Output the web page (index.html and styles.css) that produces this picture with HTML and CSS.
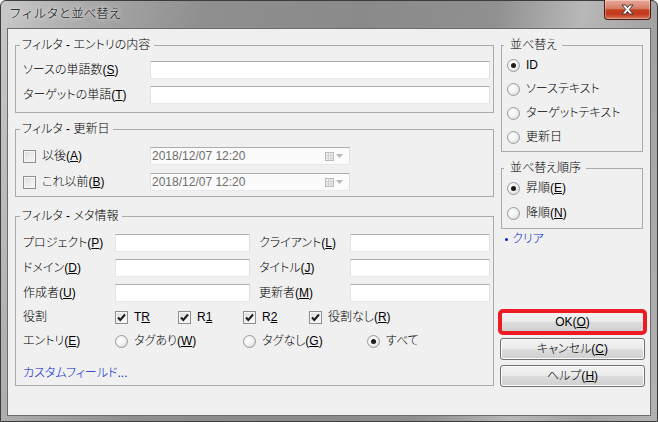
FILE: index.html
```html
<!DOCTYPE html>
<html lang="ja">
<head>
  <meta charset="UTF-8">
  <meta name="viewport" content="width=device-width, initial-scale=1.0">
  <title>フィルタと並べ替え</title>
  <link rel="stylesheet" href="styles.css">
</head>
<body>
  <div class="window">
    <div class="titlebar">
      <span class="titlebar__text">フィルタと並べ替え</span>
      <button class="titlebar__close" aria-label="閉じる">
        <svg width="13" height="11" viewBox="0 0 13 11"><path d="M1 1H4.5L6.5 3.6L8.5 1H12L8.3 5.5L12 10H8.5L6.5 7.4L4.5 10H1L4.7 5.5Z" fill="#fff" stroke="#3a3a3a" stroke-width="1" stroke-linejoin="round"/></svg>
      </button>
    </div>

    <div class="client">
      <div class="filters">
        <fieldset class="group group--entry">
          <legend class="group__title">フィルタ - エントリの内容</legend>
          <div class="row">
            <span class="row__label">ソースの単語数(<u>S</u>)</span>
            <span class="textbox textbox--wide"></span>
          </div>
          <div class="row">
            <span class="row__label">ターゲットの単語(<u>T</u>)</span>
            <span class="textbox textbox--wide"></span>
          </div>
        </fieldset>

        <fieldset class="group group--date">
          <legend class="group__title">フィルタ - 更新日</legend>
          <div class="row">
            <span class="row__label"><span class="check"></span><span class="choice__text">以後(<u>A</u>)</span></span>
            <span class="datebox">
              <span>2018/12/07 12:20</span>
              <span class="datebox__icons">
                <svg width="9" height="9" viewBox="0 0 9 9"><rect x="0.5" y="0.5" width="8" height="8" fill="#f2f2f2" stroke="#b8b8b8"/><path d="M0.5 3.5H8.5M0.5 6H8.5M3.5 0.5V8.5M6 0.5V8.5" stroke="#d0d0d0"/></svg>
                <svg width="7" height="4" viewBox="0 0 7 4"><path d="M0 0H7L3.5 4Z" fill="#b8b8b8"/></svg>
              </span>
            </span>
          </div>
          <div class="row">
            <span class="row__label"><span class="check"></span><span class="choice__text">これ以前(<u>B</u>)</span></span>
            <span class="datebox">
              <span>2018/12/07 12:20</span>
              <span class="datebox__icons">
                <svg width="9" height="9" viewBox="0 0 9 9"><rect x="0.5" y="0.5" width="8" height="8" fill="#f2f2f2" stroke="#b8b8b8"/><path d="M0.5 3.5H8.5M0.5 6H8.5M3.5 0.5V8.5M6 0.5V8.5" stroke="#d0d0d0"/></svg>
                <svg width="7" height="4" viewBox="0 0 7 4"><path d="M0 0H7L3.5 4Z" fill="#b8b8b8"/></svg>
              </span>
            </span>
          </div>
        </fieldset>

        <fieldset class="group group--meta">
          <legend class="group__title">フィルタ - メタ情報</legend>
          <div class="row">
            <span class="row__label row__label--meta">プロジェクト(<u>P</u>)</span>
            <span class="textbox textbox--short"></span>
            <span class="row__label row__label--second">クライアント(<u>L</u>)</span>
            <span class="textbox textbox--mid"></span>
          </div>
          <div class="row">
            <span class="row__label row__label--meta">ドメイン(<u>D</u>)</span>
            <span class="textbox textbox--short"></span>
            <span class="row__label row__label--second">タイトル(<u>J</u>)</span>
            <span class="textbox textbox--mid"></span>
          </div>
          <div class="row">
            <span class="row__label row__label--meta">作成者(<u>U</u>)</span>
            <span class="textbox textbox--short"></span>
            <span class="row__label row__label--second">更新者(<u>M</u>)</span>
            <span class="textbox textbox--mid"></span>
          </div>
          <div class="row row--roles">
            <span class="row__label row__label--meta">役割</span>
            <span class="choice choice--tr"><span class="check is-checked"><svg width="11" height="11" viewBox="0 0 11 11"><path d="M2 5.5L4.3 8L9 2.5" fill="none" stroke="#1c1c1c" stroke-width="2"/></svg></span><span class="choice__text">T<u>R</u></span></span>
            <span class="choice choice--r1"><span class="check is-checked"><svg width="11" height="11" viewBox="0 0 11 11"><path d="M2 5.5L4.3 8L9 2.5" fill="none" stroke="#1c1c1c" stroke-width="2"/></svg></span><span class="choice__text">R<u>1</u></span></span>
            <span class="choice choice--r2"><span class="check is-checked"><svg width="11" height="11" viewBox="0 0 11 11"><path d="M2 5.5L4.3 8L9 2.5" fill="none" stroke="#1c1c1c" stroke-width="2"/></svg></span><span class="choice__text">R<u>2</u></span></span>
            <span class="choice"><span class="check is-checked"><svg width="11" height="11" viewBox="0 0 11 11"><path d="M2 5.5L4.3 8L9 2.5" fill="none" stroke="#1c1c1c" stroke-width="2"/></svg></span><span class="choice__text">役割なし(<u>R</u>)</span></span>
          </div>
          <div class="row row--entry">
            <span class="row__label row__label--meta">エントリ(<u>E</u>)</span>
            <span class="choice choice--tagged"><span class="radio"></span><span class="choice__text">タグあり(<u>W</u>)</span></span>
            <span class="choice choice--untagged"><span class="radio"></span><span class="choice__text">タグなし(<u>G</u>)</span></span>
            <span class="choice"><span class="radio is-checked"></span><span class="choice__text">すべて</span></span>
          </div>
          <div class="row row--link">
            <span class="link">カスタムフィールド...</span>
          </div>
        </fieldset>
      </div>

      <div class="side">
        <fieldset class="group group--side group--sort">
          <legend class="group__title group__title--side">並べ替え</legend>
          <div class="row"><span class="choice"><span class="radio is-checked"></span><span class="choice__text">ID</span></span></div>
          <div class="row"><span class="choice"><span class="radio"></span><span class="choice__text">ソーステキスト</span></span></div>
          <div class="row"><span class="choice"><span class="radio"></span><span class="choice__text">ターゲットテキスト</span></span></div>
          <div class="row"><span class="choice"><span class="radio"></span><span class="choice__text">更新日</span></span></div>
        </fieldset>

        <fieldset class="group group--side group--order">
          <legend class="group__title group__title--side">並べ替え順序</legend>
          <div class="row"><span class="choice"><span class="radio is-checked"></span><span class="choice__text">昇順(<u>E</u>)</span></span></div>
          <div class="row"><span class="choice"><span class="radio"></span><span class="choice__text">降順(<u>N</u>)</span></span></div>
        </fieldset>

        <div class="clear"><span class="clear__dot"></span><span class="link">クリア</span></div>

        <div class="actions">
          <button class="button button--default">OK(<u>O</u>)</button>
          <button class="button">キャンセル(<u>C</u>)</button>
          <button class="button">ヘルプ(<u>H</u>)</button>
        </div>
      </div>
    </div>
  </div>
</body>
</html>
```

FILE: styles.css
```css
* {
  box-sizing: border-box;
}

html,
body {
  margin: 0;
  height: 100%;
  overflow: hidden;
}

body {
  font-family: "Liberation Sans", "Noto Sans CJK JP", sans-serif;
  font-size: 12px;
  font-weight: 300;
  line-height: 14px;
  color: #000;
  font-feature-settings: "palt";
  background: #fff;
}

u {
  text-underline-offset: 1px;
}

.window {
  display: flex;
  flex-direction: column;
  width: 658px;
  height: 422px;
  padding: 0 6px 5px;
  border: 1px solid #3c3c3c;
  border-radius: 6px 6px 0 0;
  background: linear-gradient(100deg, #c9c9c9 0%, #a9a9a9 12%, #8f8f8f 28%, #8a8a8a 50%, #909090 68%, #b8b8b8 80%, #a2a2a2 90%, #b3b3b3 100%);
}

.titlebar {
  display: flex;
  justify-content: space-between;
  align-items: flex-start;
  height: 27px;
}

.titlebar__text {
  padding: 6px 0 0 2px;
  font-size: 12.5px;
  font-feature-settings: normal;
  text-shadow: 0 0 6px rgba(255, 255, 255, .9), 0 0 2px rgba(255, 255, 255, .8);
}

.titlebar__close {
  display: flex;
  align-items: center;
  justify-content: center;
  width: 47px;
  height: 20px;
  margin-top: -1px;
  padding: 0;
  border: 1px solid #4a1a12;
  border-top: none;
  border-radius: 0 0 4px 4px;
  background: linear-gradient(#e8a999 0%, #d67c64 45%, #c2401f 52%, #c43a20 75%, #d7765b 100%);
  box-shadow: inset 0 0 0 1px rgba(255, 255, 255, .35);
}

.client {
  flex: 1;
  display: flex;
  gap: 7px;
  padding: 9px 7px 28px;
  border: 1px solid #6b6b6b;
  background: #f0f0f0;
}

.filters {
  width: 479px;
  flex: none;
}

.side {
  display: flex;
  flex-direction: column;
  width: 142px;
  flex: none;
}

.group {
  margin: 0;
  border: 1px solid #a9a9a9;
  min-inline-size: 0;
}

.group__title {
  margin-left: -3px;
  padding: 0 4px 0 2px;
  line-height: 14px;
}

.group__title--side {
  margin-left: -3px;
  padding: 0 5px 0 6px;
}

.group--entry {
  padding: 9px 3px 8px 7px;
}

.group--date {
  margin-top: 9px;
  padding: 11px 3px 5px 7px;
}

.group--meta {
  margin-top: 12px;
  padding: 11px 3px 5px 7px;
}

.row {
  display: flex;
  align-items: center;
  height: 18px;
}

.row + .row {
  margin-top: 7px;
}

.group--date .row + .row {
  margin-top: 8px;
}

.group--meta .row--roles,
.group--meta .row--entry {
  margin-top: 6px;
}

.group--meta .row--link {
  height: 14px;
  margin-top: 16px;
}

.row__label {
  display: flex;
  align-items: center;
  width: 127px;
  flex: none;
}

.row__label--meta {
  width: 92px;
}

.row__label--second {
  width: 91px;
  margin-left: 9px;
}

.textbox {
  display: block;
  height: 18px;
  background: #fff;
  border: 1px solid;
  border-color: #abadb3 #dbdfe6 #e3e9ef #e2e3ea;
}

.textbox--wide {
  width: 340px;
}

.textbox--short {
  width: 135px;
}

.textbox--mid {
  width: 140px;
}

.datebox {
  display: flex;
  align-items: center;
  justify-content: space-between;
  width: 200px;
  height: 18px;
  padding: 0 6px 0 1px;
  font-family: "Liberation Sans", sans-serif;
  font-weight: 400;
  color: #6d6d6d;
  background: #fbfbfb;
  border: 1px solid;
  border-color: #abadb3 #dbdfe6 #e3e9ef #e2e3ea;
}

.datebox__icons {
  display: flex;
  align-items: center;
  gap: 2px;
}

.choice {
  display: flex;
  align-items: center;
}

.choice--tr {
  width: 63px;
}

.choice--r1 {
  width: 65px;
}

.choice--r2 {
  width: 66px;
}

.choice--tagged {
  width: 128px;
}

.choice--untagged {
  width: 124px;
}

.choice__text {
  margin-left: 6px;
}

.check {
  display: block;
  flex: none;
  width: 13px;
  height: 13px;
  border: 1px solid #8e8f8f;
  background: linear-gradient(135deg, #dcdcdc, #fbfbfb);
  box-shadow: inset 0 0 0 1px #f6f6f6;
}

.check svg {
  display: block;
}

.radio {
  display: block;
  flex: none;
  width: 13px;
  height: 13px;
  padding: 3px;
  border: 1px solid #9a9a9a;
  border-radius: 50%;
  background: radial-gradient(circle at 40% 40%, #fff 0, #f2f2f2 45%, #cdcdcd 100%);
}

.radio.is-checked::after {
  content: "";
  display: block;
  width: 5px;
  height: 5px;
  border-radius: 50%;
  background: #1b1b1b;
}

.link {
  color: #0026cc;
}

.group--side {
  padding: 4px 3px 5px 5px;
}

.group--side .row + .row {
  margin-top: 6px;
}

.group--order {
  margin-top: 9px;
  padding-bottom: 6px;
}

.group--order .row + .row {
  margin-top: 7px;
}

.clear {
  display: flex;
  align-items: center;
  margin-top: 3px;
  padding-left: 4px;
}

.clear__dot {
  width: 3px;
  height: 3px;
  margin-right: 4px;
  border-radius: 50%;
  background: #0026cc;
}

.actions {
  display: flex;
  flex-direction: column;
  gap: 5px;
  margin: auto -2px 0 -1px;
}

.button {
  height: 22px;
  padding: 0;
  font: inherit;
  color: #000;
  border: 1px solid #707070;
  border-radius: 3px;
  background: linear-gradient(#f2f2f2 0%, #ebebeb 50%, #dddddd 50%, #cfcfcf 100%);
  box-shadow: inset 0 0 0 1px #fcfcfc;
}

.button--default {
  outline: 4px solid #ed1c24;
  outline-offset: -2px;
}
```
